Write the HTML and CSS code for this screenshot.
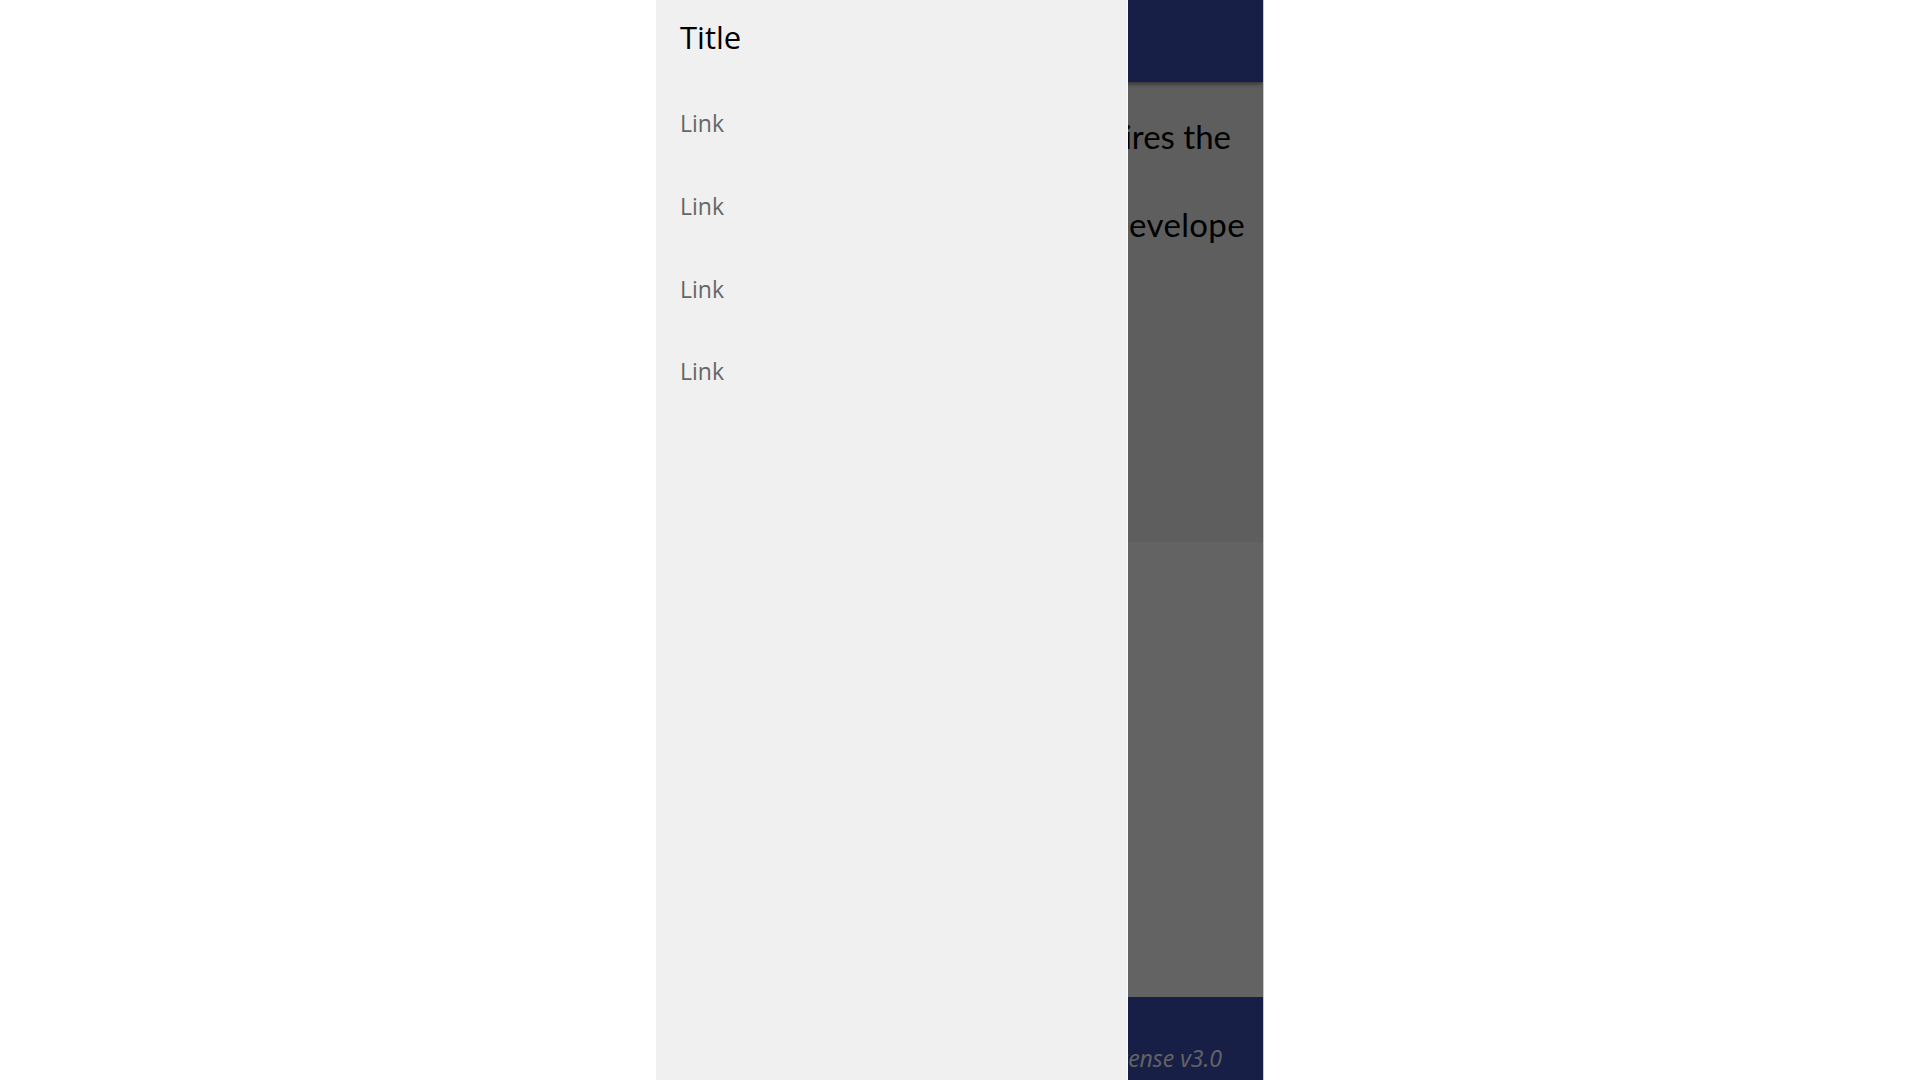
FILE: index.html
```html
<!DOCTYPE html>
<html lang="en">
<head>
<meta charset="utf-8">
<title>App</title>
<link rel="stylesheet" href="styles.css">
</head>
<body>
<div class="app">
  <header class="app-header"></header>
  <section class="hero">
    <p class="hero-line">Running this application requires the</p>
    <p class="hero-line hero-line--second">with the help of a JavaScript develope</p>
  </section>
  <main class="main"></main>
  <footer class="app-footer">
    <span class="footer-text">Licensed under the GNU General Public License v3.0</span>
  </footer>
  <div class="overlay"></div>
  <nav class="drawer">
    <div class="drawer-title">Title</div>
    <a class="drawer-link" href="#">Link</a>
    <a class="drawer-link" href="#">Link</a>
    <a class="drawer-link" href="#">Link</a>
    <a class="drawer-link" href="#">Link</a>
  </nav>
</div>
</body>
</html>
```
FILE: styles.css
```css
html, body {
  margin: 0;
  padding: 0;
  height: 100%;
  background: #ffffff;
  font-family: "Open Sans", "Noto Sans", sans-serif;
}

.app {
  position: relative;
  width: 608px;
  height: 100vh;
  margin: 0 auto;
  box-sizing: border-box;
  border-right: 1px solid #c9c9c9;
  display: flex;
  flex-direction: column;
  overflow: hidden;
  background: #ffffff;
}

.app-header {
  height: 82px;
  flex: none;
  background: #3f51b5;
  box-shadow: 0 2px 4px rgba(0, 0, 0, 0.45);
  position: relative;
  z-index: 1;
}

.hero {
  height: 460px;
  flex: none;
  background: #f1f1f1;
  padding: 10px 32px 0 0;
  box-sizing: border-box;
  display: flex;
  flex-direction: column;
  align-items: flex-end;
}

.hero-line {
  margin: 0;
  font-family: Lato, "Open Sans", sans-serif;
  font-size: 33px;
  line-height: 88px;
  color: #000;
  white-space: nowrap;
}

.hero-line--second {
  margin-right: -14px;
  letter-spacing: 0.35px;
}

.main {
  flex: 1;
  background: #ffffff;
}

.app-footer {
  height: 83px;
  flex: none;
  background: #3f51b5;
  display: flex;
  align-items: flex-end;
  justify-content: center;
  padding-bottom: 10px;
  box-sizing: border-box;
}

.footer-text {
  font-style: italic;
  font-size: 23px;
  line-height: 24px;
  color: #ffffff;
  white-space: nowrap;
}

.overlay {
  position: absolute;
  inset: 0;
  background: rgba(0, 0, 0, 0.61);
  z-index: 2;
}

.drawer {
  position: absolute;
  top: 0;
  left: 0;
  bottom: 0;
  width: 472px;
  box-sizing: border-box;
  background: #f0f0f0;
  border-right: 1px solid #fafafa;
  z-index: 3;
  display: flex;
  flex-direction: column;
  padding-left: 24px;
}

.drawer-title {
  font-size: 31px;
  line-height: 40px;
  padding: 17px 0 25px 0;
  color: #000;
}

.drawer-link {
  display: block;
  font-size: 23px;
  line-height: 32px;
  padding: 25.33px 0;
  color: #666666;
  text-decoration: none;
}
```
